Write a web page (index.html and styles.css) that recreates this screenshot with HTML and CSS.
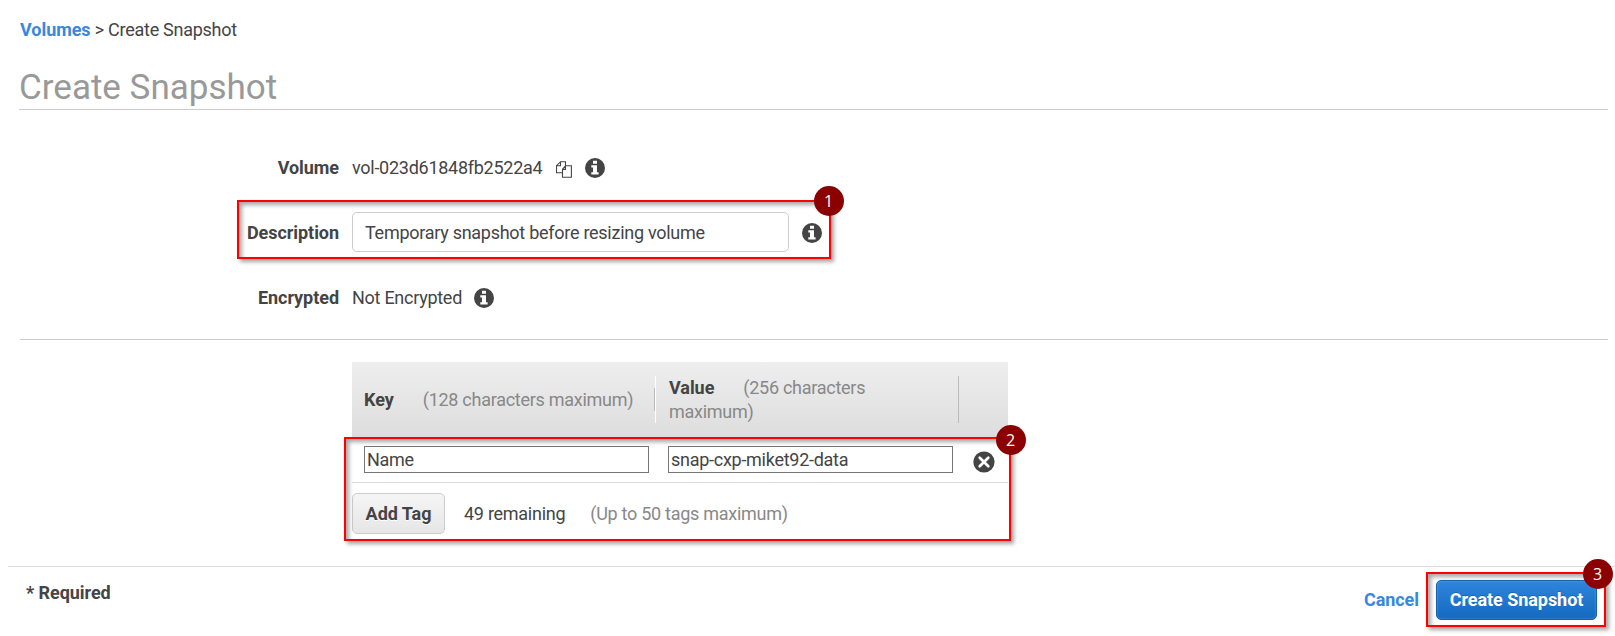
FILE: index.html
```
<!DOCTYPE html>
<html lang="en">
<head>
<meta charset="utf-8">
<title>Create Snapshot</title>
<link rel="stylesheet" href="styles.css">
</head>
<body>
<svg class="defs" aria-hidden="true">
  <symbol id="info" viewBox="0 0 20 20">
    <circle cx="10" cy="10" r="10" fill="#444"/>
    <path d="M8 2.8h4v3H8zM6.3 7.3H12v6.9h1.6v2.2H6.3v-2.2H8V9.5H6.3z" fill="#fff"/>
  </symbol>
</svg>
<nav class="crumbs"><a class="link">Volumes</a> &gt; Create Snapshot</nav>
<h1 class="title">Create Snapshot</h1>
<main class="form">
  <div class="row">
    <span class="label">Volume</span>
    <span class="value">vol-023d61848fb2522a4</span>
    <svg class="copy" viewBox="0 0 16 17" fill="#fff" stroke="#444" stroke-width="1.1"><path d="M4.500.7h5v11h-9V4.700zM4.500.7v4h-4"/><path d="M9.500 4.700h5.900v11.600H6.500V8.200zM9.500 4.700v3.700h-3"/></svg>
    <svg class="info"><use href="#info"/></svg>
  </div>
  <div class="row row-marked">
    <span class="label">Description</span>
    <span class="field">Temporary snapshot before resizing volume</span>
    <svg class="info"><use href="#info"/></svg>
    <div class="mark mark-1"><span class="badge">1</span></div>
  </div>
  <div class="row">
    <span class="label">Encrypted</span>
    <span class="value">Not Encrypted</span>
    <svg class="info"><use href="#info"/></svg>
  </div>
</main>
<section class="tags">
  <div class="table">
    <div class="head">
      <div class="th th-key"><b>Key</b><span class="hint">(128 characters maximum)</span></div>
      <div class="rule"></div>
      <div class="th th-value"><b>Value</b><span class="hint">(256 characters maximum)</span></div>
    </div>
    <div class="tag-row">
      <span class="tag-input">Name</span>
      <span class="tag-input">snap-cxp-miket92-data</span>
      <svg class="remove" viewBox="0 0 22 22"><circle cx="11" cy="11" r="10.600" fill="#444"/><path d="M6.700 6.700l8.600 8.600M15.300 6.700l-8.600 8.600" stroke="#fff" stroke-width="2.700" stroke-linecap="round"/></svg>
    </div>
    <div class="add-row">
      <span class="btn">Add Tag</span>
      <span class="remaining">49 remaining</span>
      <span class="hint-limit">(Up to 50 tags maximum)</span>
    </div>
    <div class="mark mark-2"><span class="badge">2</span></div>
  </div>
</section>
<footer class="footer">
  <span class="required">* Required</span>
  <div class="actions">
    <a class="link">Cancel</a>
    <span class="btn-primary">Create Snapshot<span class="mark mark-3"><span class="badge">3</span></span></span>
  </div>
</footer>
</body>
</html>
```
FILE: styles.css
```
* { box-sizing: border-box; }
body {
  margin: 0;
  height: 636px;
  overflow: hidden;
  background: #fff;
  color: #444;
  font: 18px/24px Roboto, sans-serif;
  letter-spacing: -0.27px;
  white-space: nowrap;
}
.defs { display: block; width: 0; height: 0; }
b, .label, .link, .btn, .btn-primary, .required { font-weight: 700; letter-spacing: -0.05px; }
.link { color: #3a87de; }
.crumbs { padding: 18px 0 0 20px; }
.title {
  margin: 23px 7px 0 19px;
  height: 45px;
  border-bottom: 1px solid #ccc;
  color: #999;
  font-weight: 400;
  font-size: 35px;
  line-height: 45px;
  letter-spacing: 0;
}
.form {
  display: grid;
  grid-template-rows: 40px 40px 40px;
  gap: 25px;
  margin: 38px 7px 0 20px;
  height: 192px;
  border-bottom: 1px solid #ccc;
}
.row { display: flex; align-items: center; position: relative; }
.label { width: 319px; margin-right: 13px; text-align: right; }
.info { width: 20px; height: 20px; margin-left: 12px; }
.row-marked .info { margin-left: 13px; }
.copy { width: 16px; height: 17px; margin: 2px 1px 0 14px; }
.field {
  width: 437px;
  height: 40px;
  margin-top: -2px;
  padding: 0 12px;
  border: 1px solid #ccc;
  border-radius: 5px;
  line-height: 40px;
}
.mark {
  position: absolute;
  border: 2px solid #f00;
  box-shadow: 3px 3px 4px rgba(0,0,0,.35), inset 3px 3px 4px rgba(0,0,0,.35);
}
.mark-1 { left: 217px; top: -13px; width: 594px; height: 59px; }
.mark-2 { left: -8px; top: 75px; width: 667px; height: 104px; }
.mark-3 { left: -11px; top: -9px; width: 180px; height: 55px; }
.badge {
  position: absolute;
  right: -14.5px;
  top: -16.5px;
  width: 30px;
  height: 30px;
  border-radius: 50%;
  background: #8b0000;
  color: #fff;
  font: 400 16px/30px "Open Sans", sans-serif;
  text-align: center;
  letter-spacing: 0;
  text-shadow: none;
}
.mark-2 .badge { right: -16.5px; top: -14.5px; }
.mark-3 .badge { right: -8.5px; top: -15.5px; }
.tags { padding: 22px 0 0 352px; }
.table { position: relative; width: 656px; }
.head {
  display: flex;
  align-items: center;
  height: 76px;
  padding: 0 0 1px 12px;
  background: linear-gradient(#eee, #ddd);
}
.th-key { width: 290px; }
.hint { margin-left: 29px; color: #888; }
.rule { width: 2px; height: 47px; border-right: 1px solid #fff; background: linear-gradient(#bbb, #bbb) 0 12px / 1px 23px no-repeat; }
.th-value { width: 303px; height: 47px; padding: 0 80px 0 13px; border-right: 1px solid #bbb; white-space: normal; }
.tag-row { display: flex; height: 45px; padding: 8px 0 0 12px; border-bottom: 1px solid #ddd; }
.tag-input {
  width: 285px;
  height: 27px;
  margin-right: 19px;
  padding-left: 2px;
  border: 1px solid #767676;
  line-height: 26px;
}
.remove { width: 22px; height: 22px; margin: 5px 0 0 .5px; }
.add-row { display: flex; align-items: center; height: 62px; }
.btn {
  width: 93px;
  height: 41px;
  margin-bottom: 1px;
  border: 1px solid #ccc;
  border-radius: 5px;
  background: linear-gradient(#f5f5f5, #e6e6e6);
  line-height: 39px;
  text-align: center;
  text-shadow: 0 1px 0 #fff;
}
.remaining { margin-left: 19px; }
.hint-limit { margin-left: 25px; color: #888; }
.footer {
  display: flex;
  justify-content: space-between;
  margin: 21px 0 0 8px;
  padding: 13px 18px 0 18px;
  border-top: 1px solid #ddd;
}
.required { padding-top: 1px; }
.actions { display: flex; align-items: center; gap: 17px; height: 40px; }
.btn-primary {
  position: relative;
  width: 161px;
  height: 40px;
  border: 1px solid #1560ad;
  border-radius: 5px;
  background: linear-gradient(#2f85dc, #146abf);
  box-shadow: inset 0 0 2px rgba(255,255,255,.35);
  color: #fff;
  line-height: 38px;
  text-align: center;
  text-shadow: 0 -1px 0 rgba(0,0,0,.2);
}
```
